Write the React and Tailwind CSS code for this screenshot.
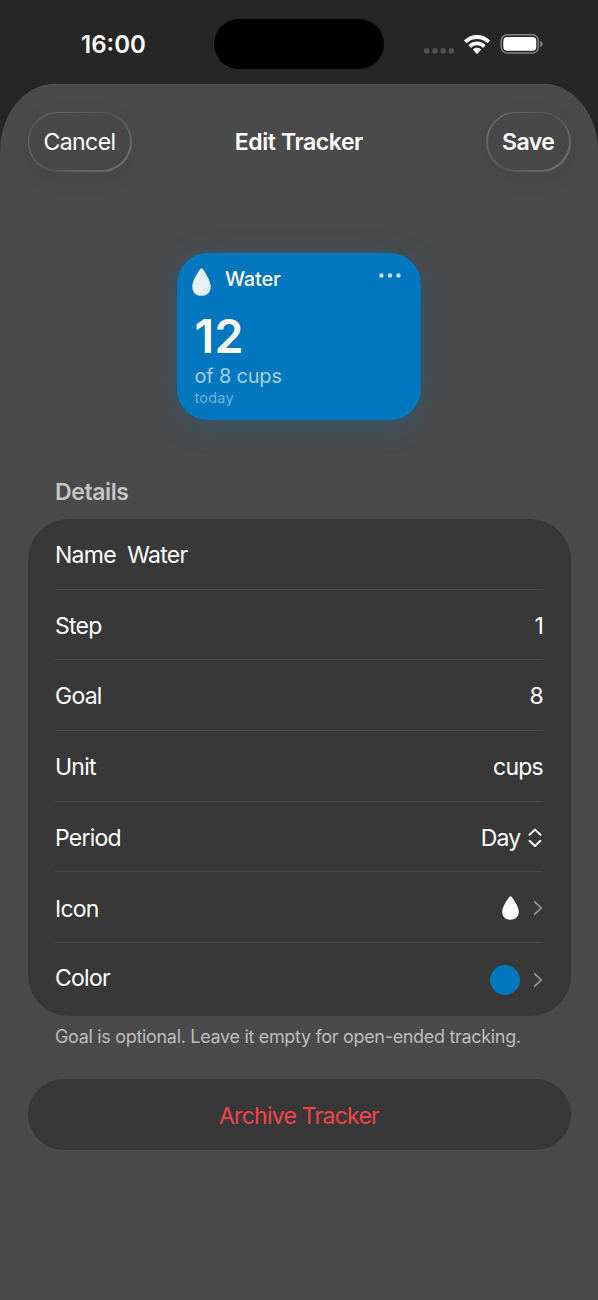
const DROP =
  'M9.5 0.3C10 0.3 10.5 0.6 10.9 1.2C13.6 5.2 18.7 12.6 18.7 18.4C18.7 24.6 14.8 27.7 9.5 27.7C4.2 27.7 0.3 24.6 0.3 18.4C0.3 12.6 5.4 5.2 8.1 1.2C8.5 0.6 9 0.3 9.5 0.3Z';

function Drop({ className }) {
  return (
    <svg viewBox="0 0 19 28" preserveAspectRatio="none" className={className} fill="currentColor">
      <path d={DROP} />
    </svg>
  );
}

function Chevron() {
  return (
    <svg viewBox="0 0 10 16" className="h-4 w-2.5" fill="none" stroke="#9b9b9d" strokeWidth="1.6" strokeLinecap="round" strokeLinejoin="round">
      <path d="M1.5 1.7L8.3 8L1.5 14.3" />
    </svg>
  );
}

function StatusBar() {
  return (
    <div className="flex h-[84px] shrink-0 items-start">
      <div className="w-[214px] pt-[29px] pl-[81px] text-[24px] leading-[32px] font-semibold tracking-[0px]">16:00</div>
      <div className="mt-[19px] h-[50px] w-[170px] rounded-full bg-black" />
      <div className="flex h-[88px] items-center pl-[40px]">
        <svg width="31" height="6" className="mt-[13px]" fill="#535353">
          <rect x="0" y="0.2" width="5.4" height="5.4" rx="2" />
          <rect x="8.2" y="0.2" width="5.4" height="5.4" rx="2" />
          <rect x="16.4" y="0.2" width="5.4" height="5.4" rx="2" />
          <rect x="24.6" y="0.2" width="5.4" height="5.4" rx="2" />
        </svg>
        <svg width="26" height="19" viewBox="0 0 26 19" className="ml-[9px]" fill="white">
          <path d="M13 0C8.1 0 3.6 1.9 0.4 5C0 5.4 0 5.8 0.3 6.1L2 7.8C2.3 8.1 2.7 8.1 3 7.8C5.6 5.4 9.1 3.9 13 3.9S20.4 5.4 23 7.8C23.3 8.1 23.7 8.1 24 7.8L25.7 6.1C26 5.8 26 5.4 25.6 5C22.4 1.9 17.9 0 13 0Z" />
          <path d="M13 6.5C9.9 6.5 7 7.7 4.9 9.6C4.5 10 4.5 10.4 4.8 10.7L6.6 12.5C6.9 12.8 7.3 12.7 7.6 12.4C9 11.1 10.9 10.3 13 10.3S17 11.1 18.4 12.4C18.7 12.7 19.1 12.8 19.4 12.5L21.2 10.7C21.5 10.4 21.5 10 21.1 9.6C19 7.7 16.1 6.5 13 6.5Z" />
          <path d="M13 12.8C11.5 12.8 10.2 13.3 9.3 14.1C8.9 14.5 8.9 14.8 9.2 15.1L12.4 18.4C12.8 18.8 13.2 18.8 13.6 18.4L16.8 15.1C17.1 14.8 17.1 14.5 16.7 14.1C15.8 13.3 14.5 12.8 13 12.8Z" />
        </svg>
        <svg width="43" height="20" viewBox="0 0 43 20" className="ml-[10px]">
          <rect x="1.2" y="0.8" width="37.2" height="18.2" rx="6" fill="none" stroke="#838383" strokeWidth="1.5" />
          <rect x="3.3" y="3" width="33" height="13.8" rx="4" fill="white" />
          <path d="M40.2 7V13C41.8 12.6 42.6 11.4 42.6 10S41.8 7.4 40.2 7Z" fill="#838383" />
        </svg>
      </div>
    </div>
  );
}

function GlassButton({ className, children }) {
  return (
    <button className={`h-[60px] rounded-full bg-linear-135 from-[#747474] via-[#545454] to-[#747474] p-[1.5px] shadow-[0_6px_24px_rgba(0,0,0,0.05)] ${className}`}>
      <span className="flex h-full items-center justify-center rounded-full bg-[#484848]">{children}</span>
    </button>
  );
}

function Row({ label, children, last }) {
  return (
    <div className={last ? 'flex h-[73px] items-center justify-between' : 'flex h-[70.7px] items-center justify-between border-b-[1.5px] border-[#464648]'}>
      <span className={last ? 'pb-[3px]' : 'pt-[2.5px]'}>{label}</span>
      {children}
    </div>
  );
}

export default function App() {
  return (
    <div className="flex h-[1300px] w-[598px] flex-col overflow-hidden bg-[#262626] font-['Inter',sans-serif] text-[23px] leading-[30px] tracking-[-0.75px] text-white">
      <StatusBar />
      <main className="flex grow flex-col rounded-t-[54px_68px] border-t border-[#525252] bg-[#4a4a4a] px-[27.5px]">
        <header className="flex items-center justify-between pt-[26.5px]">
          <GlassButton className="w-[104px] tracking-[-0.55px]">Cancel</GlassButton>
          <h1 className="mt-px mr-5 font-semibold tracking-[-0.4px]">Edit Tracker</h1>
          <GlassButton className="w-[84.5px] font-semibold tracking-[-0.5px]">Save</GlassButton>
        </header>

        <section className="mt-[81.5px] ml-[149.5px] h-[167px] w-[244px] rounded-[31px] bg-[#0077be] shadow-[0_6px_28px_rgba(0,119,190,0.3)]">
          <div className="flex pt-[15px] pl-[15px]">
            <Drop className="h-[28px] w-[19px] text-[#e6f2f9]" />
            <span className="-mt-[4px] ml-[14px] text-[20px] font-medium tracking-[-0.15px]">Water</span>
            <svg width="22" height="5" className="mt-[5px] mr-[20px] ml-auto" fill="#c2dff0">
              <circle cx="2.4" cy="2.5" r="2.2" />
              <circle cx="11" cy="2.5" r="2.2" />
              <circle cx="19.5" cy="2.5" r="2.2" />
            </svg>
          </div>
          <div className="pl-[17.5px]">
            <div className="mt-[14px] text-[46.5px] leading-[52px] font-semibold tracking-[0.4px]">12</div>
            <div className="mt-px text-[20px] leading-[26px] tracking-[-0.2px] text-[#a6d0e9]">of 8 cups</div>
            <div className="text-[14.5px] leading-[17px] tracking-[0.2px] text-[#73b4dc]">today</div>
          </div>
        </section>

        <h2 className="mt-[57px] ml-[27.5px] font-semibold tracking-[-0.4px] text-[#c5c5c5]">Details</h2>
        <section className="mt-[12px] h-[496.5px] rounded-[41px] bg-[#383838] px-[27.5px]">
          <div className="flex h-[70.7px] items-center border-b-[1.5px] border-[#464648] pt-[2px]">
            <span>Name</span>
            <span className="ml-[11.5px]">Water</span>
          </div>
          <Row label="Step"><span className="pt-[2px]">1</span></Row>
          <Row label="Goal"><span className="pt-[2.5px]">8</span></Row>
          <Row label="Unit"><span className="pt-[2.5px]">cups</span></Row>
          <Row label="Period">
            <span className="flex items-center pt-[2px]">
              Day
              <svg width="14" height="20" viewBox="0 0 14 20" className="mr-[1.5px] ml-[7px]" fill="none" stroke="white" strokeWidth="1.9" strokeLinecap="round" strokeLinejoin="round">
                <path d="M1.5 6.8L7 1.6L12.5 6.8M1.5 12.8L7 18L12.5 12.8" />
              </svg>
            </span>
          </Row>
          <Row label="Icon">
            <span className="flex items-center pt-[2px]">
              <Drop className="mr-[14px] h-[24px] w-[17px]" />
              <Chevron />
            </span>
          </Row>
          <Row label="Color" last>
            <span className="flex items-center pt-px">
              <span className="mr-[13px] size-[30px] rounded-full bg-[#0077be]" />
              <Chevron />
            </span>
          </Row>
        </section>
        <p className="mt-[9.5px] ml-[27.5px] text-[18px] leading-[24px] tracking-[-0.32px] whitespace-nowrap text-[#bdbdbd]">
          Goal is optional. Leave it empty for open-ended tracking.
        </p>
        <button className="mt-[30px] h-[71px] shrink-0 rounded-full bg-[#383838] pt-[2px] text-[#f4444c]">Archive Tracker</button>
      </main>
    </div>
  );
}
